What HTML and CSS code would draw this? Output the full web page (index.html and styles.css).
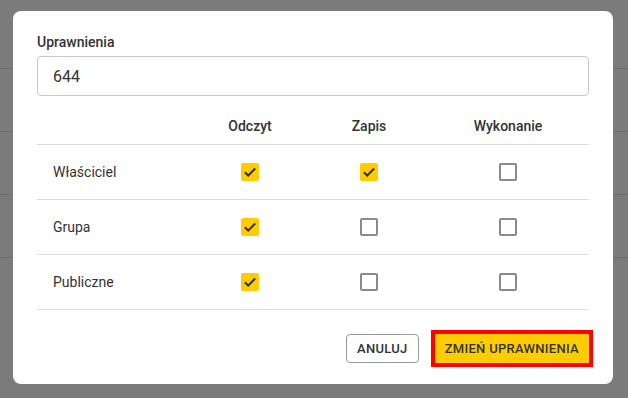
FILE: index.html
```html
<!DOCTYPE html>
<html lang="pl">
<head>
  <meta charset="UTF-8" />
  <title>Uprawnienia</title>
  <link rel="stylesheet" href="styles.css">
</head>
<body>
  <div class="page">
    <div class="page-row"></div>
    <div class="page-row"></div>
    <div class="page-row"></div>
    <div class="page-row"></div>
  </div>

  <div class="dialog">
    <label class="field-label" for="mode">Uprawnienia</label>
    <input class="field-input" id="mode" type="text" value="644">

    <div class="perm-table">
      <div class="perm-row head">
        <div></div>
        <div class="cell">Odczyt</div>
        <div class="cell">Zapis</div>
        <div class="cell">Wykonanie</div>
      </div>
      <div class="perm-row">
        <div class="name">Właściciel</div>
        <div class="cell"><span class="check on"><svg viewBox="0 0 18 18"><path d="M3.8 9.2l3.4 3.3 7-7"/></svg></span></div>
        <div class="cell"><span class="check on"><svg viewBox="0 0 18 18"><path d="M3.8 9.2l3.4 3.3 7-7"/></svg></span></div>
        <div class="cell"><span class="check"></span></div>
      </div>
      <div class="perm-row">
        <div class="name">Grupa</div>
        <div class="cell"><span class="check on"><svg viewBox="0 0 18 18"><path d="M3.8 9.2l3.4 3.3 7-7"/></svg></span></div>
        <div class="cell"><span class="check"></span></div>
        <div class="cell"><span class="check"></span></div>
      </div>
      <div class="perm-row">
        <div class="name">Publiczne</div>
        <div class="cell"><span class="check on"><svg viewBox="0 0 18 18"><path d="M3.8 9.2l3.4 3.3 7-7"/></svg></span></div>
        <div class="cell"><span class="check"></span></div>
        <div class="cell"><span class="check"></span></div>
      </div>
    </div>

    <div class="actions">
      <button class="btn btn-outline">Anuluj</button>
      <button class="btn btn-primary">Zmień uprawnienia</button>
    </div>
  </div>
</body>
</html>
```

FILE: styles.css
```css
html, body {
  width: 100%;
  height: 100%;
  margin: 0;
  padding: 0;
  font-family: Roboto, "Liberation Sans", sans-serif;
  background-color: #7b7b7b;
  color: #333;
  overflow: hidden;
}

.page {
  padding-top: 6px;
}

.page-row {
  height: 63px;
  border-bottom: 1px solid #6c6c6c;
  box-sizing: border-box;
}

.dialog {
  position: absolute;
  top: 11px;
  left: 13px;
  width: 600px;
  height: 373px;
  box-sizing: border-box;
  padding: 23px 24px 0 24px;
  background-color: white;
  border-radius: 8px;
}

.field-label {
  display: block;
  font-size: 14px;
  font-weight: 500;
  line-height: 16px;
  margin-bottom: 6px;
  color: #333;
}

.field-input {
  display: block;
  width: 100%;
  height: 40px;
  box-sizing: border-box;
  margin: 0;
  padding: 0 15px;
  font-family: inherit;
  font-size: 16px;
  color: #333;
  border: 1px solid #c8c8c8;
  border-radius: 4px;
  outline: none;
}

.perm-table {
  margin-top: 8px;
}

.perm-row {
  display: grid;
  grid-template-columns: 153px 120px 118px 160px;
  align-items: center;
  height: 55px;
  box-sizing: border-box;
  border-bottom: 1px solid #dcdcdc;
  font-size: 14px;
}

.perm-row.head {
  height: 41px;
  font-weight: 500;
  padding-top: 4px;
}

.name {
  padding-left: 16px;
}

.cell {
  display: flex;
  justify-content: center;
}

.check {
  width: 18px;
  height: 18px;
  box-sizing: border-box;
  border: 2px solid #8a8a8a;
  border-radius: 2px;
  background-color: white;
}

.check.on {
  border: none;
  background-color: #ffcc00;
}

.check svg {
  display: block;
  width: 18px;
  height: 18px;
  fill: none;
  stroke: #333;
  stroke-width: 2;
}

.actions {
  display: flex;
  justify-content: flex-end;
  gap: 16px;
  margin-top: 24px;
}

.btn {
  height: 29px;
  padding: 0 10px;
  font-family: inherit;
  font-size: 13px;
  font-weight: 500;
  letter-spacing: 0.3px;
  text-transform: uppercase;
  color: #333;
  border-radius: 4px;
  cursor: pointer;
}

.btn-outline {
  background-color: white;
  border: 1px solid #999;
}

.btn-primary {
  background-color: #ffcc00;
  border: none;
  border-radius: 0;
  outline: 4px solid #ff0000;
}
```
